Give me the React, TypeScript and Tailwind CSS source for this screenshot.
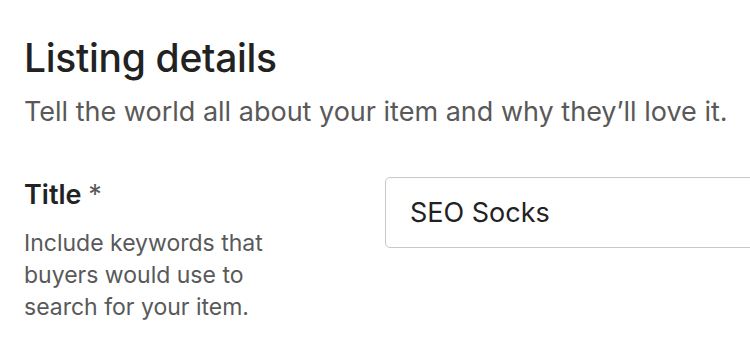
import React from 'react'

const App: React.FC = () => {
    return (
        <div className="w-[750px] h-[346px] overflow-hidden bg-white font-['Inter',sans-serif] text-[#222222]">
            <div className="pt-[36px] pl-[24px]">
                <h1 className="text-[39px] leading-[44px] font-medium tracking-[-0.3px] whitespace-nowrap">Listing details</h1>
                <p className="mt-[14px] text-[27px] leading-[36px] text-[#595959] whitespace-nowrap">
                    Tell the world all about your item and why they’ll love it.
                </p>
            </div>

            <div className="flex items-start mt-[47px] pl-[24px]">
                {/* label + help */}
                <div className="w-[361px] shrink-0">
                    <label className="block text-[27px] leading-[36px] font-semibold">
                        Title <span className="font-normal text-[#595959]">*</span>
                    </label>
                    <p className="mt-[14px] w-[262px] text-[23px] leading-[32px] text-[#595959]">
                        Include keywords that buyers would use to search for your item.
                    </p>
                </div>
                <div className="shrink-0">
                    <input
                        type="text"
                        defaultValue="SEO Socks"
                        className="w-[420px] h-[71px] px-[24px] rounded-[5px] border border-[#c8c8c8] text-[27px] text-[#222222] outline-none"
                    />
                </div>
            </div>
        </div>
    )
}

export default App
